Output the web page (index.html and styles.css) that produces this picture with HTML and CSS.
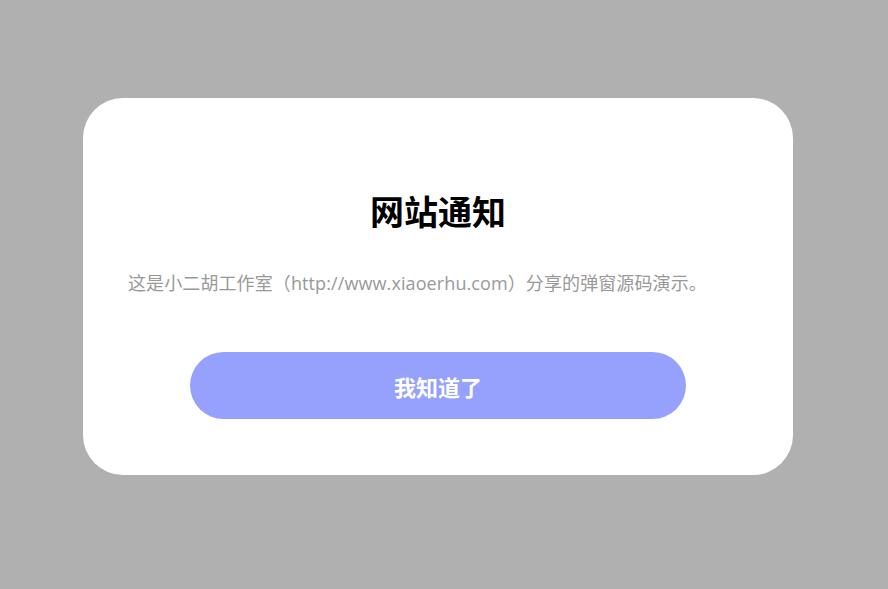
FILE: index.html
```html
<!DOCTYPE html>
<html lang="zh-CN">
<head>
<meta charset="utf-8">
<title>网站通知</title>
<link rel="stylesheet" href="styles.css">
</head>
<body>
<div class="modal">
  <h2 class="title">网站通知</h2>
  <p class="message">这是小二胡工作室（http://www.xiaoerhu.com）分享的弹窗源码演示。</p>
  <button class="ok" type="button">我知道了</button>
</div>
</body>
</html>
```
FILE: styles.css
```css
html, body {
  margin: 0;
  padding: 0;
  height: 100%;
}
body {
  background: #b0b0b0;
  font-family: "Open Sans", "Noto Sans CJK SC", sans-serif;
  padding: 98px 0 0 83px;
  box-sizing: border-box;
}
.modal {
  width: 710px;
  height: 377px;
  box-sizing: border-box;
  background: #fff;
  border-radius: 40px;
  padding: 89px 45px 0 45px;
  display: flex;
  flex-direction: column;
}
.title {
  margin: 0;
  font-family: "Noto Sans CJK SC", sans-serif;
  font-size: 34px;
  font-weight: 700;
  line-height: 48px;
  height: 48px;
  text-align: center;
  color: #000;
}
.message {
  margin: 35px 0 0 0;
  font-size: 18px;
  line-height: 27px;
  color: #999;
  white-space: nowrap;
  letter-spacing: 0.1px;
}
.ok {
  align-self: center;
  margin-top: 55px;
  width: 496px;
  height: 67px;
  border: none;
  border-radius: 34px;
  background: #96a1fe;
  color: #fff;
  font-family: "Noto Sans CJK SC", sans-serif;
  font-size: 22px;
  font-weight: 700;
  padding: 0;
}
```
